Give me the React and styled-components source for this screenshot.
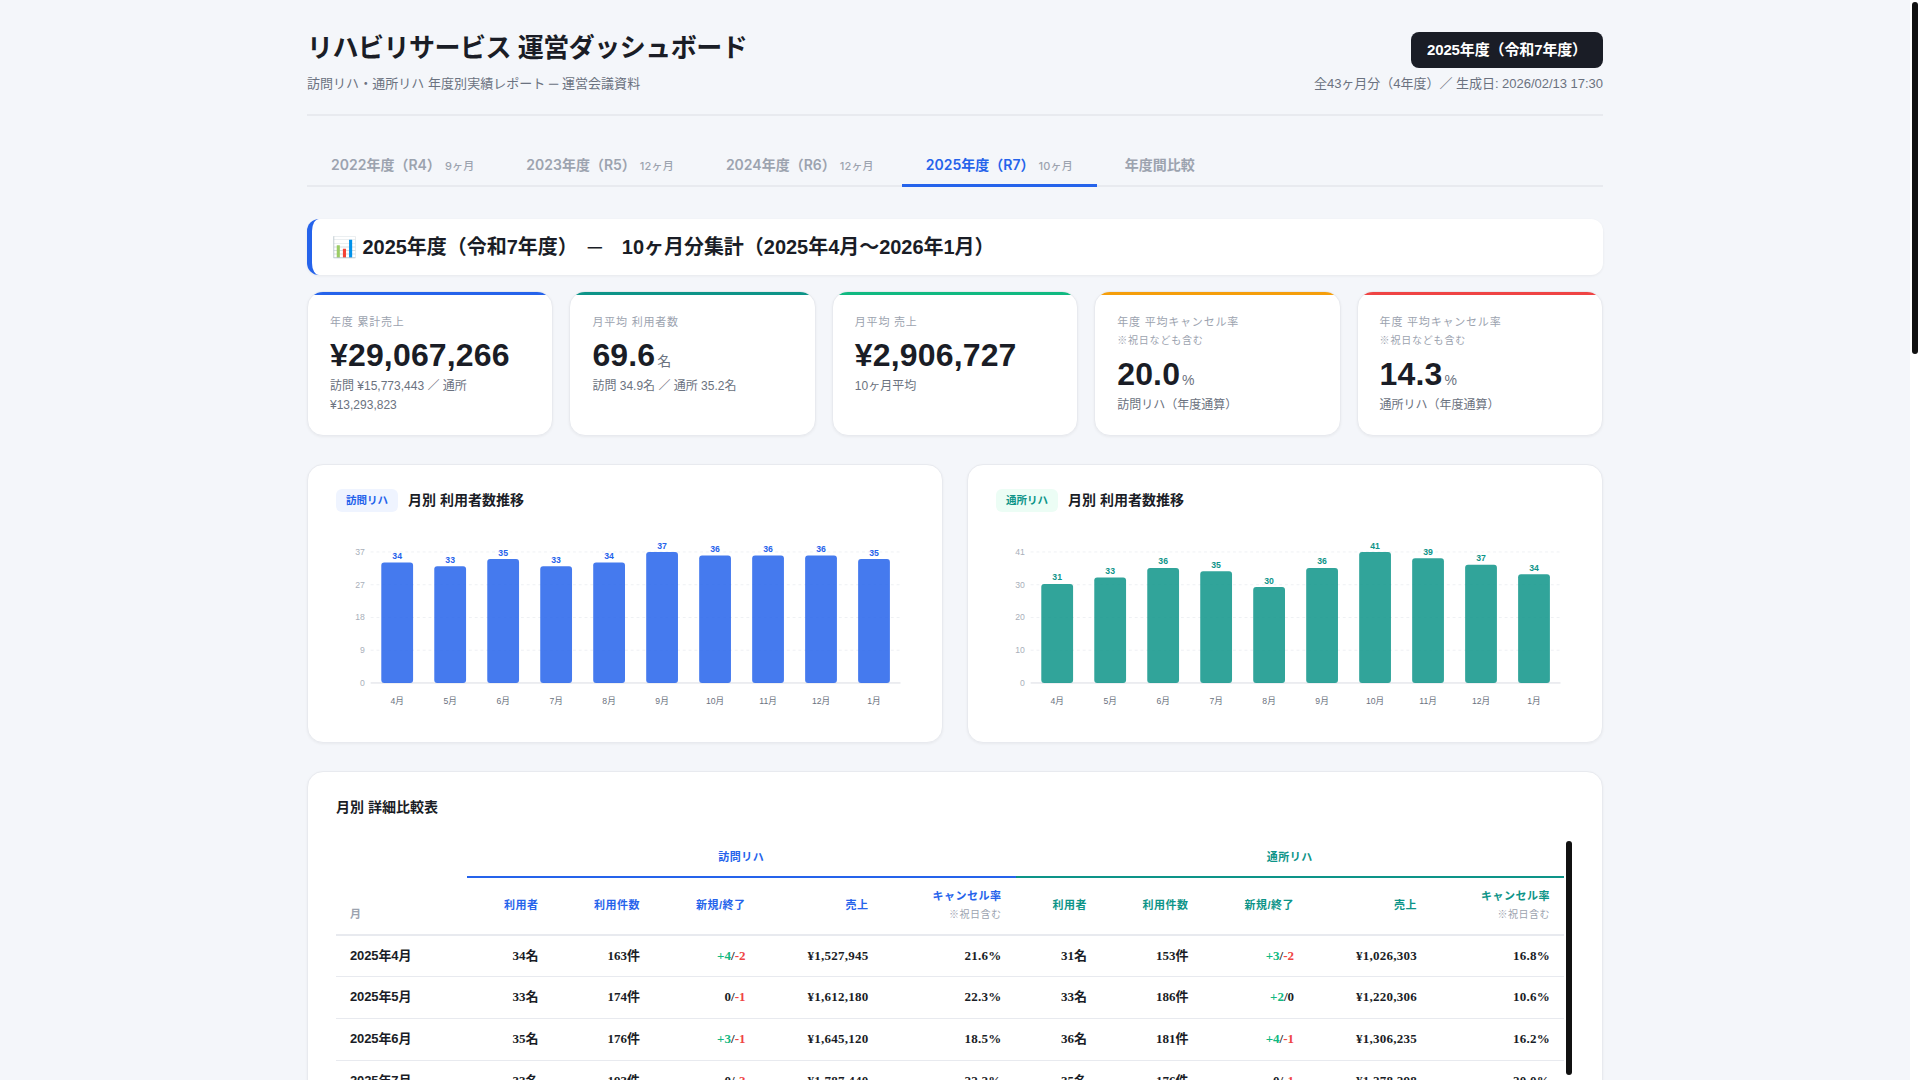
import React from 'react';
import styled, { createGlobalStyle } from 'styled-components';

const c = {
  bg: '#f4f6fa',
  ink: '#1a1d26',
  sub: '#6b7280',
  mute: '#9ca3af',
  line: '#e8eaef',
  blue: '#2563eb',
  teal: '#0d9488',
  green: '#10b981',
  amber: '#f59e0b',
  red: '#ef4444',
};

const Global = createGlobalStyle`
  *, *::before, *::after { box-sizing: border-box; margin: 0; padding: 0; }
  html, body { height: 100%; overflow: hidden; }
  body {
    background: ${c.bg};
    color: ${c.ink};
    font-family: "Liberation Sans", "Noto Sans CJK JP", sans-serif;
    font-size: 14px;
    line-height: 1.6;
  }
`;

const Shell = styled.div`
  display: flex;
  height: 100vh;
  overflow: hidden;
`;

const Viewport = styled.main`
  flex: 1;
  min-width: 0;
  overflow: hidden;
`;

const Track = styled.div`
  flex: none;
  width: 10px;
  padding: 2px;
  background: #fff;
`;

const Thumb = styled.div`
  width: 6px;
  height: ${(p) => p.$length}px;
  border-radius: 3px;
  background: #111;
`;

const Container = styled.div`
  width: 1360px;
  margin: 0 auto;
  padding: 32px;
`;

const Header = styled.header`
  display: flex;
  justify-content: space-between;
  height: 84px;
  border-bottom: 2px solid ${c.line};
`;

const Title = styled.h1`
  font-size: 26px;
  font-weight: 700;
  font-kerning: none;
  line-height: 1.3;
  height: 41.6px;
  letter-spacing: -0.5px;
`;

const Caption = styled.p`
  font-size: 13px;
  color: ${c.sub};
  letter-spacing: ${(p) => p.$tracking || 0}px;
`;

const HeaderSide = styled.div`
  display: flex;
  flex-direction: column;
  align-items: flex-end;
  gap: 5.6px;
`;

const YearBadge = styled.span`
  padding: 6px 16px;
  border-radius: 8px;
  background: ${c.ink};
  color: #fff;
  font-size: 15px;
  font-weight: 700;
  letter-spacing: -0.13px;
`;

const Tabs = styled.nav`
  display: flex;
  align-items: stretch;
  gap: 4px;
  height: 43px;
  margin: 28px 0 32px;
  box-shadow: inset 0 -2px 0 ${c.line};
`;

const Tab = styled.button`
  padding: 0 24px;
  border: 0;
  border-bottom: 3px solid ${(p) => (p.$active ? c.blue : 'transparent')};
  background: none;
  color: ${(p) => (p.$active ? c.blue : c.mute)};
  font-family: Inter, "Noto Sans CJK JP", sans-serif;
  font-size: 14px;
  font-weight: 600;
  white-space: nowrap;
`;

const TabCount = styled.span`
  margin-left: 4px;
  color: ${c.mute};
  font-size: 11px;
  font-weight: 500;
  letter-spacing: 0.17px;
`;

const SectionTitle = styled.h2`
  height: 56px;
  padding: 12px 20px;
  border-left: 5px solid ${c.blue};
  border-radius: 12px;
  background: #fff;
  box-shadow: 0 1px 3px rgba(0, 0, 0, 0.06);
  font-size: 20px;
  font-weight: 700;
  line-height: 32px;
  letter-spacing: -0.03px;
  white-space: pre;
`;

const KpiRow = styled.section`
  display: grid;
  grid-template-columns: repeat(5, 1fr);
  gap: 16px;
  height: 145px;
  margin: 16px 0 28px;
`;

const Panel = styled.section`
  border: 1px solid ${c.line};
  border-radius: 16px;
  background: #fff;
  box-shadow: 0 1px 3px rgba(0, 0, 0, 0.05);
`;

const KpiCard = styled(Panel)`
  position: relative;
  overflow: hidden;
  padding: 20.6px 22px 18px;

  &::before {
    content: '';
    position: absolute;
    top: 0;
    left: 0;
    right: 0;
    height: 3px;
    background: ${(p) => p.$accent};
  }
`;

const KpiLabel = styled.div`
  margin-bottom: 5.2px;
  color: ${c.mute};
  font-size: 11px;
  line-height: 18px;
  letter-spacing: 0.8px;
`;

const KpiNote = styled.span`
  font-size: 10px;
`;

const KpiValue = styled.div`
  margin-bottom: 2.5px;
  font-size: 32px;
  font-weight: 700;
  line-height: 1.2;
  letter-spacing: 0.16px;
`;

const Unit = styled.span`
  margin-left: 2px;
  color: ${c.sub};
  font-size: 14px;
  font-weight: 400;
`;

const KpiSub = styled.div`
  color: ${c.sub};
  font-size: 12px;
`;

const ChartRow = styled.div`
  display: grid;
  grid-template-columns: 1fr 1fr;
  gap: 24px;
  height: 279px;
  margin-bottom: 28px;
`;

const ChartPanel = styled(Panel)`
  padding: 24px 28px;
`;

const ChartHead = styled.div`
  display: flex;
  align-items: center;
  gap: 10px;
  height: 23px;
  margin-bottom: 13.2px;
`;

const Chip = styled.span`
  padding: 3px 10px;
  border-radius: 6px;
  background: ${(p) => p.$tint};
  color: ${(p) => p.$color};
  font-size: 10.5px;
  font-weight: 700;
`;

const PanelTitle = styled.h3`
  font-size: 14px;
  font-weight: 700;
`;

const Chart = styled.svg`
  display: block;
  width: 100%;
  overflow: visible;
  font-family: "Liberation Sans", "Noto Sans CJK JP", sans-serif;
  font-size: 9px;
`;

const TablePanel = styled(Panel)`
  height: 420px;
  padding: 24px 28px;
`;

const TableArea = styled.div`
  display: flex;
  height: 340px;
  margin-top: 20.4px;
  overflow: hidden;
`;

const Table = styled.table`
  width: 1228px;
  flex: none;
  table-layout: fixed;
  border-collapse: separate;
  border-spacing: 0;
  align-self: flex-start;
`;

const Th = styled.th`
  height: ${(p) => p.$h}px;
  padding: ${(p) => p.$pad || '0 14px'};
  border-bottom: 2px solid ${(p) => p.$rule || c.line};
  color: ${(p) => p.$color || c.mute};
  font-size: 11px;
  font-weight: 600;
  letter-spacing: 0.5px;
  text-align: ${(p) => p.$align || 'right'};
  vertical-align: ${(p) => p.$valign || 'middle'};
  white-space: nowrap;
`;

const ThNote = styled.div`
  color: ${c.mute};
  font-size: 10px;
  font-weight: 400;
  line-height: 19px;
`;

const Td = styled.td`
  height: 41.8px;
  padding: 0 14px;
  border-bottom: 1px solid ${c.line};
  font-family: "Liberation Serif", "Noto Sans CJK JP", serif;
  font-size: 13px;
  font-weight: 600;
  text-align: right;
  white-space: nowrap;
`;

const FigureTd = styled(Td)`
  letter-spacing: 0.26px;
`;

const MonthTd = styled(Td)`
  font-family: "Liberation Sans", "Noto Sans CJK JP", sans-serif;
  letter-spacing: -0.12px;
  text-align: left;
`;

const Delta = styled.span`
  color: ${(p) => p.$color};
`;

const tabs = [
  ['2022年度（R4）', '9ヶ月'],
  ['2023年度（R5）', '12ヶ月'],
  ['2024年度（R6）', '12ヶ月'],
  ['2025年度（R7）', '10ヶ月'],
  ['年度間比較', null],
];

const kpis = [
  { accent: c.blue, label: '年度 累計売上', value: '¥29,067,266', sub: '訪問 ¥15,773,443 ／ 通所 ¥13,293,823' },
  { accent: c.teal, label: '月平均 利用者数', value: '69.6', unit: '名', sub: '訪問 34.9名 ／ 通所 35.2名' },
  { accent: c.green, label: '月平均 売上', value: '¥2,906,727', sub: '10ヶ月平均' },
  { accent: c.amber, label: '年度 平均キャンセル率', note: '※祝日なども含む', value: '20.0', unit: '%', sub: '訪問リハ（年度通算）' },
  { accent: c.red, label: '年度 平均キャンセル率', note: '※祝日なども含む', value: '14.3', unit: '%', sub: '通所リハ（年度通算）' },
];

const months = ['4月', '5月', '6月', '7月', '8月', '9月', '10月', '11月', '12月', '1月'];

const charts = [
  { name: '訪問リハ', color: c.blue, tint: '#eff4ff', max: 37, data: [34, 33, 35, 33, 34, 37, 36, 36, 36, 35] },
  { name: '通所リハ', color: c.teal, tint: '#ecfdf5', max: 41, data: [31, 33, 36, 35, 30, 36, 41, 39, 37, 34] },
];

const rows = [
  ['2025年4月', ['34名', '163件', 4, -2, '¥1,527,945', '21.6%'], ['31名', '153件', 3, -2, '¥1,026,303', '16.8%']],
  ['2025年5月', ['33名', '174件', 0, -1, '¥1,612,180', '22.3%'], ['33名', '186件', 2, 0, '¥1,220,306', '10.6%']],
  ['2025年6月', ['35名', '176件', 3, -1, '¥1,645,120', '18.5%'], ['36名', '181件', 4, -1, '¥1,306,235', '16.2%']],
  ['2025年7月', ['33名', '193件', 0, -3, '¥1,787,440', '22.2%'], ['35名', '176件', 0, -1, '¥1,278,298', '20.0%']],
];

const columnWidths = [131, 85.5, 101.5, 105.5, 123, 133, 85.5, 101.5, 105.5, 123, 133];

function BarChart({ color, max, data }) {
  const left = 36;
  const top = 28;
  const plotW = 550;
  const plotH = 136;
  const base = top + plotH;
  const band = plotW / data.length;
  return (
    <Chart viewBox="0 0 600 200">
      {[0, 1, 2, 3, 4].map((i) => {
        const y = base - (plotH * i) / 4;
        return (
          <g key={i}>
            <line
              x1={left}
              x2={left + plotW}
              y1={y}
              y2={y}
              stroke={i ? '#eef0f4' : '#d8dbe2'}
              strokeDasharray={i ? '3 3' : undefined}
            />
            <text x={left - 6} y={y + 3} textAnchor="end" fill="#a9afba">
              {Math.floor((max * i) / 4)}
            </text>
          </g>
        );
      })}
      {data.map((v, i) => {
        const h = (v / max) * plotH;
        const mid = left + band * (i + 0.5);
        return (
          <g key={i}>
            <rect x={mid - band * 0.3} y={base - h} width={band * 0.6} height={h} rx="3" fill={color} opacity="0.85" />
            <text x={mid} y={base - h - 3.6} textAnchor="middle" fill={color} fontWeight="600">
              {v}
            </text>
            <text x={mid} y={base + 21.6} textAnchor="middle" fill={c.sub}>
              {months[i]}
            </text>
          </g>
        );
      })}
    </Chart>
  );
}

function SubHeads({ color }) {
  return (
    <>
      {['利用者', '利用件数', '新規/終了', '売上'].map((t) => (
        <Th key={t} $h={57.8} $color={color} $pad="0.5px 14px 0">
          {t}
        </Th>
      ))}
      <Th $h={57.8} $color={color} $pad="1px 14px 0">
        キャンセル率
        <ThNote>※祝日含む</ThNote>
      </Th>
    </>
  );
}

function Change({ value }) {
  if (value > 0) return <Delta $color={c.green}>+{value}</Delta>;
  if (value < 0) return <Delta $color={c.red}>{value}</Delta>;
  return <>0</>;
}

function ServiceCells({ data }) {
  const [users, visits, added, ended, sales, cancel] = data;
  return (
    <>
      <Td>{users}</Td>
      <Td>{visits}</Td>
      <Td>
        <Change value={added} />/<Change value={ended} />
      </Td>
      <FigureTd>{sales}</FigureTd>
      <FigureTd>{cancel}</FigureTd>
    </>
  );
}

export default function App() {
  return (
    <Shell>
      <Global />
      <Viewport>
        <Container>
          <Header>
            <div>
              <Title>リハビリサービス 運営ダッシュボード</Title>
              <Caption $tracking={0.04}>訪問リハ・通所リハ 年度別実績レポート ─ 運営会議資料</Caption>
            </div>
            <HeaderSide>
              <YearBadge>2025年度（令和7年度）</YearBadge>
              <Caption $tracking={-0.02}>全43ヶ月分（4年度）／ 生成日: 2026/02/13 17:30</Caption>
            </HeaderSide>
          </Header>

          <Tabs>
            {tabs.map(([name, count], i) => (
              <Tab key={name} $active={i === 3}>
                {name}
                {count && <TabCount>{count}</TabCount>}
              </Tab>
            ))}
          </Tabs>

          <SectionTitle>{'📊 2025年度（令和7年度）　─　10ヶ月分集計（2025年4月〜2026年1月）'}</SectionTitle>

          <KpiRow>
            {kpis.map((k, i) => (
              <KpiCard key={i} $accent={k.accent}>
                <KpiLabel>
                  {k.label}
                  {k.note && (
                    <>
                      <br />
                      <KpiNote>{k.note}</KpiNote>
                    </>
                  )}
                </KpiLabel>
                <KpiValue>
                  {k.value}
                  {k.unit && <Unit>{k.unit}</Unit>}
                </KpiValue>
                <KpiSub>{k.sub}</KpiSub>
              </KpiCard>
            ))}
          </KpiRow>

          <ChartRow>
            {charts.map((ch) => (
              <ChartPanel key={ch.name}>
                <ChartHead>
                  <Chip $color={ch.color} $tint={ch.tint}>
                    {ch.name}
                  </Chip>
                  <PanelTitle>月別 利用者数推移</PanelTitle>
                </ChartHead>
                <BarChart color={ch.color} max={ch.max} data={ch.data} />
              </ChartPanel>
            ))}
          </ChartRow>

          <TablePanel>
            <PanelTitle>月別 詳細比較表</PanelTitle>
            <TableArea>
              <Table>
                <colgroup>
                  {columnWidths.map((w, i) => (
                    <col key={i} style={{ width: w }} />
                  ))}
                </colgroup>
                <thead>
                  <tr>
                    <Th rowSpan={2} $align="left" $valign="bottom" $pad="0 14px 10px">
                      月
                    </Th>
                    <Th colSpan={5} $h={39} $align="center" $color={c.blue} $rule={c.blue} $pad="1px 14px 0">
                      訪問リハ
                    </Th>
                    <Th colSpan={5} $h={39} $align="center" $color={c.teal} $rule={c.teal} $pad="1px 14px 0">
                      通所リハ
                    </Th>
                  </tr>
                  <tr>
                    <SubHeads color={c.blue} />
                    <SubHeads color={c.teal} />
                  </tr>
                </thead>
                <tbody>
                  {rows.map(([month, visit, day]) => (
                    <tr key={month}>
                      <MonthTd>{month}</MonthTd>
                      <ServiceCells data={visit} />
                      <ServiceCells data={day} />
                    </tr>
                  ))}
                </tbody>
              </Table>
              <Track>
                <Thumb $length={234} />
              </Track>
            </TableArea>
          </TablePanel>
        </Container>
      </Viewport>
      <Track>
        <Thumb $length={352} />
      </Track>
    </Shell>
  );
}
